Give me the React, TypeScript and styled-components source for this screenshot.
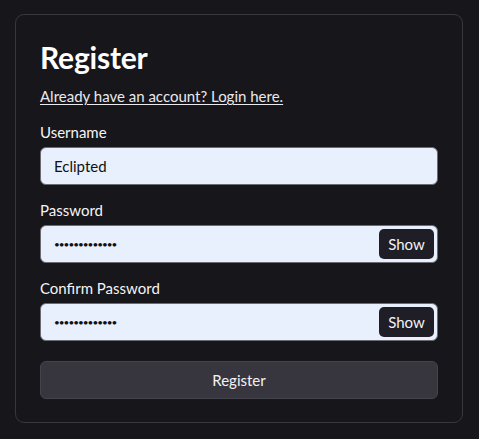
import React, { useState } from "react";
import styled, { createGlobalStyle } from "styled-components";

const Global = createGlobalStyle`
  html, body { margin: 0; padding: 0; background: #17161b; }
  body { font-family: Lato, "Noto Sans", sans-serif; color: #f4f4f6; }
  * { box-sizing: border-box; }
`;

const Page = styled.div`
  width: 479px;
  height: 439px;
  padding: 14px 16px 0 15px;
`;

const Card = styled.form`
  width: 448px;
  border: 1px solid #38373d;
  border-radius: 9px;
  background: #17161b;
  padding: 24px 24px 23px 24px;
  display: flex;
  flex-direction: column;
`;

const Title = styled.h1`
  margin: 0;
  font-size: 30px;
  font-weight: 700;
  line-height: 36px;
  color: #ffffff;
  letter-spacing: -0.2px;
`;

const LoginLink = styled.a`
  margin-top: 11px;
  font-size: 15px;
  line-height: 20px;
  color: #e9e9ee;
  text-decoration: underline;
  text-underline-offset: 2px;
  align-self: flex-start;
`;

const Label = styled.label<{ $first?: boolean }>`
  margin-top: ${(p) => (p.$first ? "16px" : "15px")};
  font-size: 15px;
  line-height: 20px;
  color: #f4f4f6;
`;

const Field = styled.div`
  margin-top: 5px;
  height: 38px;
  border: 1px solid #6c6b73;
  border-radius: 6px;
  background: #e8f0fe;
  display: flex;
  align-items: center;
  padding: 0 3px 0 13px;
`;

const Input = styled.input<{ $pw?: boolean }>`
  flex: 1;
  min-width: 0;
  border: none;
  outline: none;
  background: transparent;
  font-family: Lato, "Noto Sans", sans-serif;
  font-size: ${(p) => (p.$pw ? "10px" : "15px")};
  color: #111;
  padding: 0;
  letter-spacing: ${(p) => (p.$pw ? "-1px" : "0")};
`;

const ShowButton = styled.button`
  width: 55px;
  height: 30px;
  border: none;
  border-radius: 5px;
  background: #1f1e26;
  color: #f2f2f5;
  font-family: Lato, "Noto Sans", sans-serif;
  font-size: 15px;
  padding: 0;
  cursor: pointer;
`;

const Submit = styled.button`
  margin-top: 20px;
  height: 38px;
  border: 1px solid #45444c;
  border-radius: 6px;
  background: #37363e;
  color: #f2f2f5;
  font-family: Lato, "Noto Sans", sans-serif;
  font-size: 15px;
  cursor: pointer;
`;

function PasswordField() {
  const [shown, setShown] = useState(false);
  return (
    <Field>
      <Input $pw={!shown} type={shown ? "text" : "password"} defaultValue="thisisasecret" readOnly />
      <ShowButton type="button" onClick={() => setShown((s) => !s)}>
        {shown ? "Hide" : "Show"}
      </ShowButton>
    </Field>
  );
}

export default function App() {
  return (
    <Page>
      <Global />
      <Card onSubmit={(e) => e.preventDefault()}>
        <Title>Register</Title>
        <LoginLink href="#">Already have an account? Login here.</LoginLink>
        <Label $first>Username</Label>
        <Field>
          <Input defaultValue="Eclipted" />
        </Field>
        <Label>Password</Label>
        <PasswordField />
        <Label>Confirm Password</Label>
        <PasswordField />
        <Submit type="submit">Register</Submit>
      </Card>
    </Page>
  );
}
